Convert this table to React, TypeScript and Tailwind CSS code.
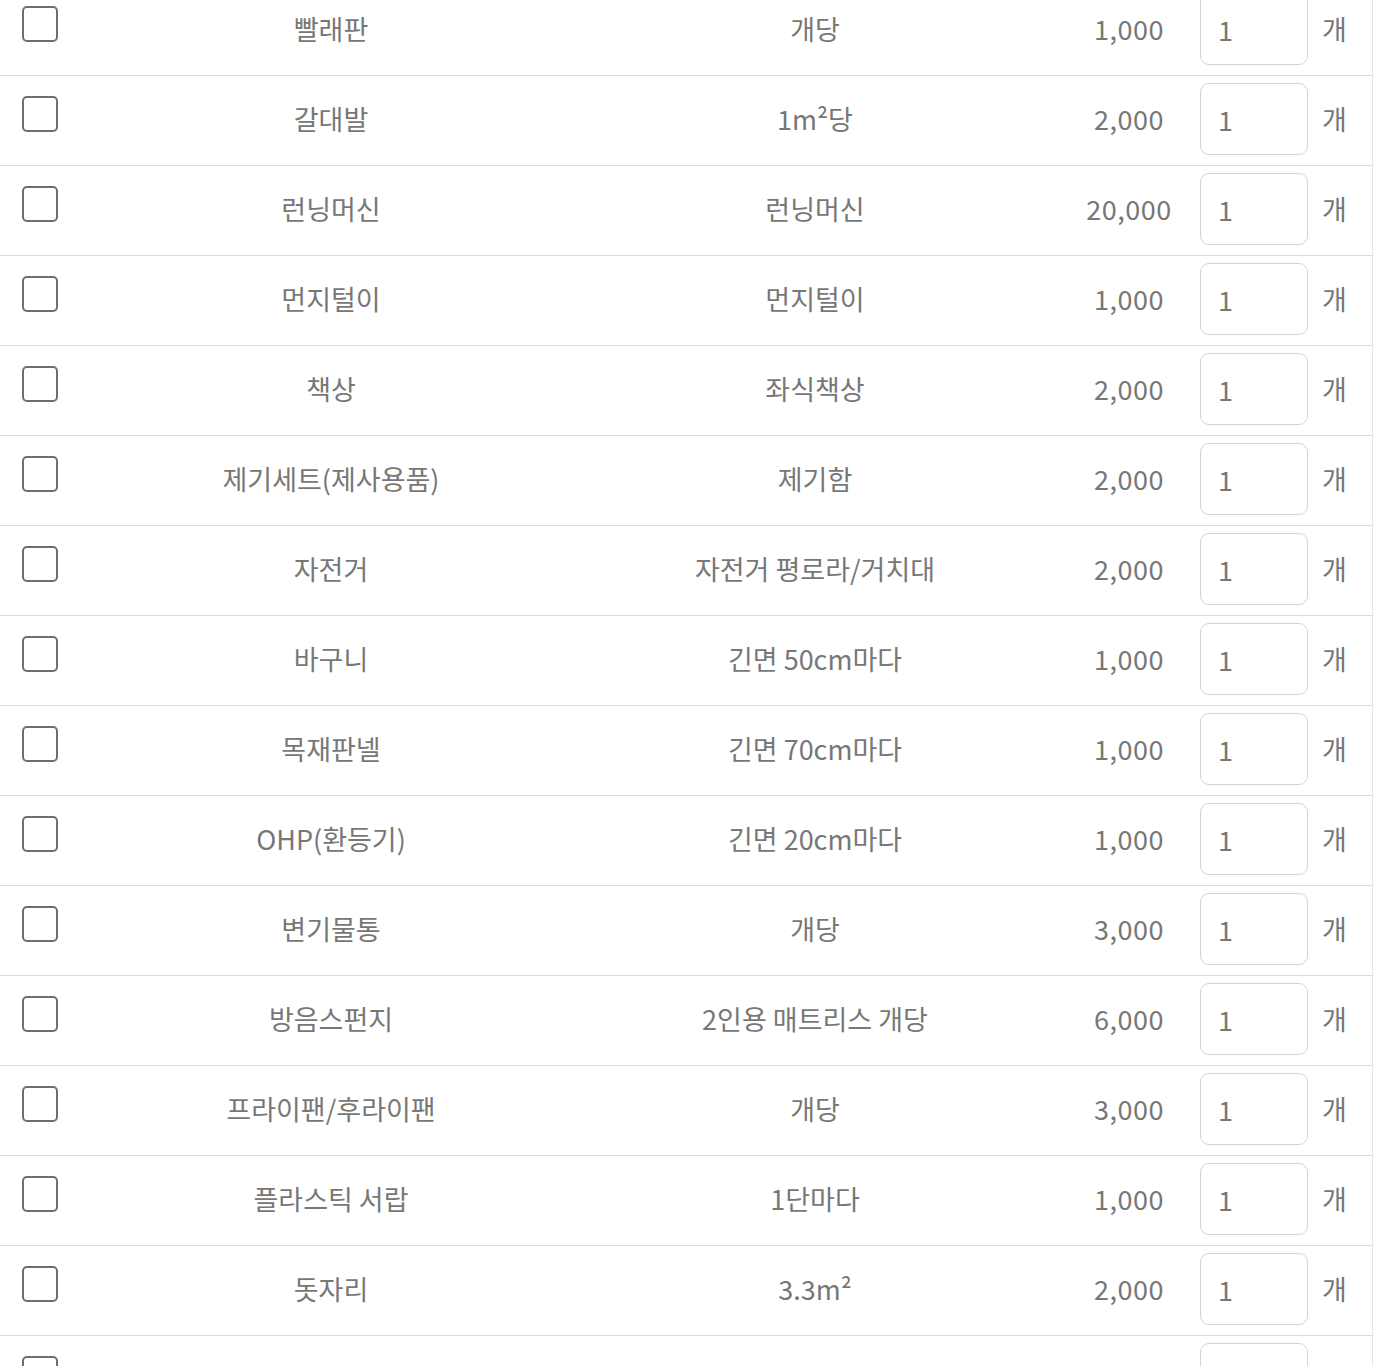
import { useState } from 'react';

type Item = { name: string; unit: string; price: string };

const ITEMS: Item[] = [
  { name: '빨래판', unit: '개당', price: '1,000' },
  { name: '갈대발', unit: '1m²당', price: '2,000' },
  { name: '런닝머신', unit: '런닝머신', price: '20,000' },
  { name: '먼지털이', unit: '먼지털이', price: '1,000' },
  { name: '책상', unit: '좌식책상', price: '2,000' },
  { name: '제기세트(제사용품)', unit: '제기함', price: '2,000' },
  { name: '자전거', unit: '자전거 평로라/거치대', price: '2,000' },
  { name: '바구니', unit: '긴면 50cm마다', price: '1,000' },
  { name: '목재판넬', unit: '긴면 70cm마다', price: '1,000' },
  { name: 'OHP(환등기)', unit: '긴면 20cm마다', price: '1,000' },
  { name: '변기물통', unit: '개당', price: '3,000' },
  { name: '방음스펀지', unit: '2인용 매트리스 개당', price: '6,000' },
  { name: '프라이팬/후라이팬', unit: '개당', price: '3,000' },
  { name: '플라스틱 서랍', unit: '1단마다', price: '1,000' },
  { name: '돗자리', unit: '3.3m²', price: '2,000' },
  // partly scrolled out at the bottom
  { name: '', unit: '', price: '' },
];

function Row({ item }: { item: Item }) {
  const [checked, setChecked] = useState(false);
  return (
    <div className="flex h-[90px] items-center border-b border-[#dcdcdc] pb-[3px] text-[27px] text-[#777]">
      <div className="w-[80px] self-start pl-[22px] pt-[20px]">
        <button
          type="button"
          onClick={() => setChecked(!checked)}
          className="block h-[36px] w-[36px] rounded-[5px] border-2 border-[#6e6e6e] bg-white"
        />
      </div>
      <div className="w-[502px] text-center">{item.name}</div>
      <div className="w-[466px] text-center">{item.unit}</div>
      <div className="ml-[10px] w-[142px] text-center tracking-[0.5px]">{item.price}</div>
      <input
        defaultValue={item.name ? '1' : ''}
        className="h-[72px] w-[108px] rounded-[9px] border border-[#d4d4d4] bg-white pl-[17px] text-[27px] text-[#777] outline-none"
      />
      <div className="pl-[14px]">{item.name ? '개' : ''}</div>
    </div>
  );
}

export default function App() {
  return (
    <div
      className="h-[1366px] w-[1376px] overflow-hidden bg-white"
      style={{ fontFamily: '"Noto Sans CJK KR", "Noto Sans", sans-serif' }}
    >
      <div className="-mt-[14px] w-[1373px] border-r border-[#e6e6e6]">
        {ITEMS.map((item, i) => (
          <Row key={i} item={item} />
        ))}
      </div>
    </div>
  );
}
